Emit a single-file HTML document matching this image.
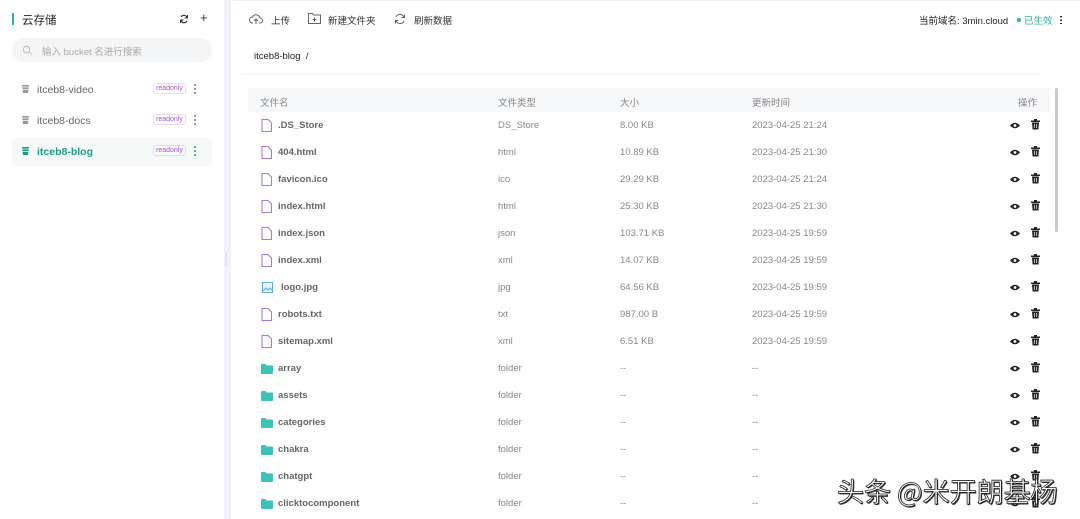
<!DOCTYPE html>
<html><head><meta charset="utf-8"><style>
*{margin:0;padding:0;box-sizing:border-box}
body{width:1080px;height:519px;overflow:hidden;background:#f1f2f5;font-family:"Liberation Sans","Noto Sans CJK SC",sans-serif;position:relative;color:#333}
.side{position:absolute;left:0;top:0;width:224px;height:519px;background:#fff}
.main{position:absolute;left:231px;top:1px;width:849px;height:518px;background:#fff}
.abs{position:absolute;white-space:nowrap}
.bk{position:absolute;left:12px;width:200px;height:28px;border-radius:6px;font-size:10.5px;color:#666}
.bk .nm{position:absolute;left:25px;top:8px}
.bk .ro{position:absolute;left:141px;top:7px;font-size:7px;color:#a855c7;border:1px solid #ead7f2;border-radius:3px;padding:1px 2px}
.bk .dots{position:absolute;left:182px;top:7px;width:2px;height:11px;background:radial-gradient(circle,#777 0.9px,transparent 1px) 0 0/2px 4px repeat-y}
.bk svg{position:absolute;left:9px;top:8px}
.row{position:absolute;left:248px;width:802px;height:27px;font-size:9.5px;color:#888}
.row span{position:absolute;top:8px}
.nm2{left:30px;color:#666;font-weight:bold}
</style></head><body>
<div class="side">
 <div class="abs" style="left:12px;top:13px;width:2px;height:12px;background:#2bb5a0"></div>
 <div class="abs" style="left:22px;top:12px;font-size:11.5px;color:#222">云存储</div>
 <svg class="abs" style="left:179px;top:14px" width="10" height="10" viewBox="0 0 10 10"><path d="M8 3.5A3.3 3.3 0 0 0 2 3M2 6.5A3.3 3.3 0 0 0 8 7" fill="none" stroke="#333" stroke-width="1.2"/><path d="M8.5 1v3h-3M1.5 9V6h3" fill="none" stroke="#333" stroke-width="1"/></svg>
 <div class="abs" style="left:200px;top:10px;font-size:13px;color:#333">+</div>
 <div class="abs" style="left:12px;top:38px;width:200px;height:24px;border-radius:12px;background:#f4f5f7"></div>
 <svg class="abs" style="left:22px;top:45px" width="10" height="10"><circle cx="4.5" cy="4.5" r="3.2" fill="none" stroke="#bbb" stroke-width="1"/><path d="M7 7l2.5 2.5" stroke="#bbb"/></svg>
 <div class="abs" style="left:42px;top:44px;font-size:9.5px;color:#aaa">输入 bucket 名进行搜索</div>
 <div class="bk" style="top:76px"><svg width="9" height="10"><path d="M1 1h7l-1 8H2z" fill="#999"/><path d="M1 3h7M1.5 5.5h6" stroke="#fff" stroke-width=".8"/></svg><span class="nm">itceb8-video</span><span class="ro">readonly</span><i class="dots"></i></div>
 <div class="bk" style="top:107px"><svg width="9" height="10"><path d="M1 1h7l-1 8H2z" fill="#999"/><path d="M1 3h7M1.5 5.5h6" stroke="#fff" stroke-width=".8"/></svg><span class="nm">itceb8-docs</span><span class="ro">readonly</span><i class="dots"></i></div>
 <div class="bk" style="top:138px;background:#f5f9f8;color:#1a9c88;font-weight:bold"><svg width="9" height="10"><path d="M1 1h7l-1 8H2z" fill="#1a9c88"/><path d="M1 3h7M1.5 5.5h6" stroke="#fff" stroke-width=".8"/></svg><span class="nm">itceb8-blog</span><span class="ro" style="font-weight:normal">readonly</span><i class="dots" style="background:radial-gradient(circle,#1a9c88 0.9px,transparent 1px) 0 0/2px 4px repeat-y"></i></div>
</div>
<div class="abs" style="left:225px;top:252px;width:2px;height:14px;background:#e4e6ea"></div>
<div class="main">
 <svg class="abs" style="left:18px;top:12px" width="14" height="12" viewBox="0 0 14 12"><path d="M4 10H3.5a3 3 0 0 1 0-6 4 4 0 0 1 7.5 1 2.5 2.5 0 0 1 0 5H10" fill="none" stroke="#666" stroke-width="1"/><path d="M7 11V6M5 8l2-2 2 2" fill="none" stroke="#666"/></svg>
 <div class="abs" style="left:40px;top:12px;font-size:9.5px;color:#333">上传</div>
 <svg class="abs" style="left:77px;top:12px" width="13" height="11"><path d="M.5 .5h4l1 1.5h7v8.5H.5z" fill="none" stroke="#666"/><path d="M6.5 4.5v4M4.5 6.5h4" stroke="#666"/></svg>
 <div class="abs" style="left:97px;top:12px;font-size:9.5px;color:#333">新建文件夹</div>
 <svg class="abs" style="left:163px;top:12px" width="12" height="12" viewBox="0 0 12 12"><path d="M10 4.5A4.3 4.3 0 0 0 2 4M2 7.5A4.3 4.3 0 0 0 10 8" fill="none" stroke="#666" stroke-width="1"/><path d="M10.5 1.5v3h-3M1.5 10.5v-3h3" fill="none" stroke="#666"/></svg>
 <div class="abs" style="left:183px;top:12px;font-size:9.5px;color:#333">刷新数据</div>
 <div class="abs" style="left:688px;top:12px;font-size:9.5px;color:#222">当前域名: 3min.cloud</div>
 <div class="abs" style="left:786px;top:17px;width:4px;height:4px;border-radius:50%;background:#2bb5a0"></div>
 <div class="abs" style="left:793px;top:12px;font-size:9.5px;color:#2bb5a0">已生效</div>
 <div class="abs" style="left:829px;top:14px;width:2px;height:9px;background:radial-gradient(circle,#333 0.9px,transparent 1px) 0 0/2px 3.5px repeat-y"></div>
 <div class="abs" style="left:23px;top:50px;font-size:9.5px;color:#222">itceb8-blog &nbsp;/</div>
 <div class="abs" style="left:10px;top:73px;width:800px;height:1px;background:#f3f4f6"></div>
 <div class="abs" style="left:17px;top:87px;width:802px;height:24px;background:#f7f8fa"></div>
 <div class="abs" style="left:824px;top:87px;width:3px;height:144px;background:#c8c8c8;border-radius:2px"></div>
 <div class="abs" style="left:29px;top:94px;font-size:9.5px;color:#888">文件名</div>
 <div class="abs" style="left:267px;top:94px;font-size:9.5px;color:#888">文件类型</div>
 <div class="abs" style="left:389px;top:94px;font-size:9.5px;color:#888">大小</div>
 <div class="abs" style="left:521px;top:94px;font-size:9.5px;color:#888">更新时间</div>
 <div class="abs" style="left:787px;top:94px;font-size:9.5px;color:#888">操作</div>
</div>
<div id="rows"></div>
<div class="abs" style="left:837px;top:471px;font-size:27px;color:#fff;-webkit-text-stroke:0.8px #222;text-shadow:1px 1px 0 #333;font-family:'Noto Sans CJK SC',sans-serif">头条 @米开朗基杨</div>
<script>
var d=[["f",".DS_Store","DS_Store","8.00 KB","2023-04-25 21:24"],["f","404.html","html","10.89 KB","2023-04-25 21:30"],["f","favicon.ico","ico","29.29 KB","2023-04-25 21:24"],["f","index.html","html","25.30 KB","2023-04-25 21:30"],["f","index.json","json","103.71 KB","2023-04-25 19:59"],["f","index.xml","xml","14.07 KB","2023-04-25 19:59"],["i","logo.jpg","jpg","64.56 KB","2023-04-25 19:59"],["f","robots.txt","txt","987.00 B","2023-04-25 19:59"],["f","sitemap.xml","xml","6.51 KB","2023-04-25 19:59"],["d","array","folder","--","--"],["d","assets","folder","--","--"],["d","categories","folder","--","--"],["d","chakra","folder","--","--"],["d","chatgpt","folder","--","--"],["d","clicktocomponent","folder","--","--"]];
var h="";d.forEach(function(r,i){var y=112+i*27;var ic;
if(r[0]=="f")ic='<svg style="position:absolute;left:13px;top:7px" width="11" height="13"><path d="M1 .5h6l3.5 3.5v8.5H1z" fill="none" stroke="#a77bd0" stroke-width="1.1"/></svg>';
else if(r[0]=="i")ic='<svg style="position:absolute;left:14px;top:8px" width="11" height="11"><rect x=".5" y=".5" width="10" height="10" fill="#e6f3fb" stroke="#5aaee0"/><path d="M1 9l3-3 2 2 2-2 2 2" fill="none" stroke="#5aaee0"/></svg>';
else ic='<svg style="position:absolute;left:13px;top:9px" width="12" height="10"><path d="M0 1a1 1 0 0 1 1-1h3.5l1 1.5H11a1 1 0 0 1 1 1V9a1 1 0 0 1-1 1H1a1 1 0 0 1-1-1z" fill="#3cc3b8"/></svg>';
h+='<div class="row" style="top:'+y+'px">'+ic+'<span class="nm2" style="left:'+(r[0]=="i"?33:30)+'px">'+r[1]+'</span><span style="left:250px">'+r[2]+'</span><span style="left:372px">'+r[3]+'</span><span style="left:504px">'+r[4]+'</span>'+
'<svg style="position:absolute;left:762px;top:10px" width="10" height="7"><path d="M0 3.5Q5 -2 10 3.5Q5 9 0 3.5z" fill="#222"/><circle cx="5" cy="3.5" r="1.4" fill="#fff"/></svg>'+
'<svg style="position:absolute;left:783px;top:7px" width="9" height="11"><rect x="0" y="1.5" width="9" height="1.5" fill="#222"/><rect x="3" y="0" width="3" height="1.5" fill="#222"/><path d="M1 3.5h7l-.6 7H1.6z" fill="#222"/><path d="M3.3 5v4M5.7 5v4" stroke="#fff" stroke-width=".7"/></svg></div>';});
document.getElementById("rows").innerHTML=h;
</script>
</body></html>
